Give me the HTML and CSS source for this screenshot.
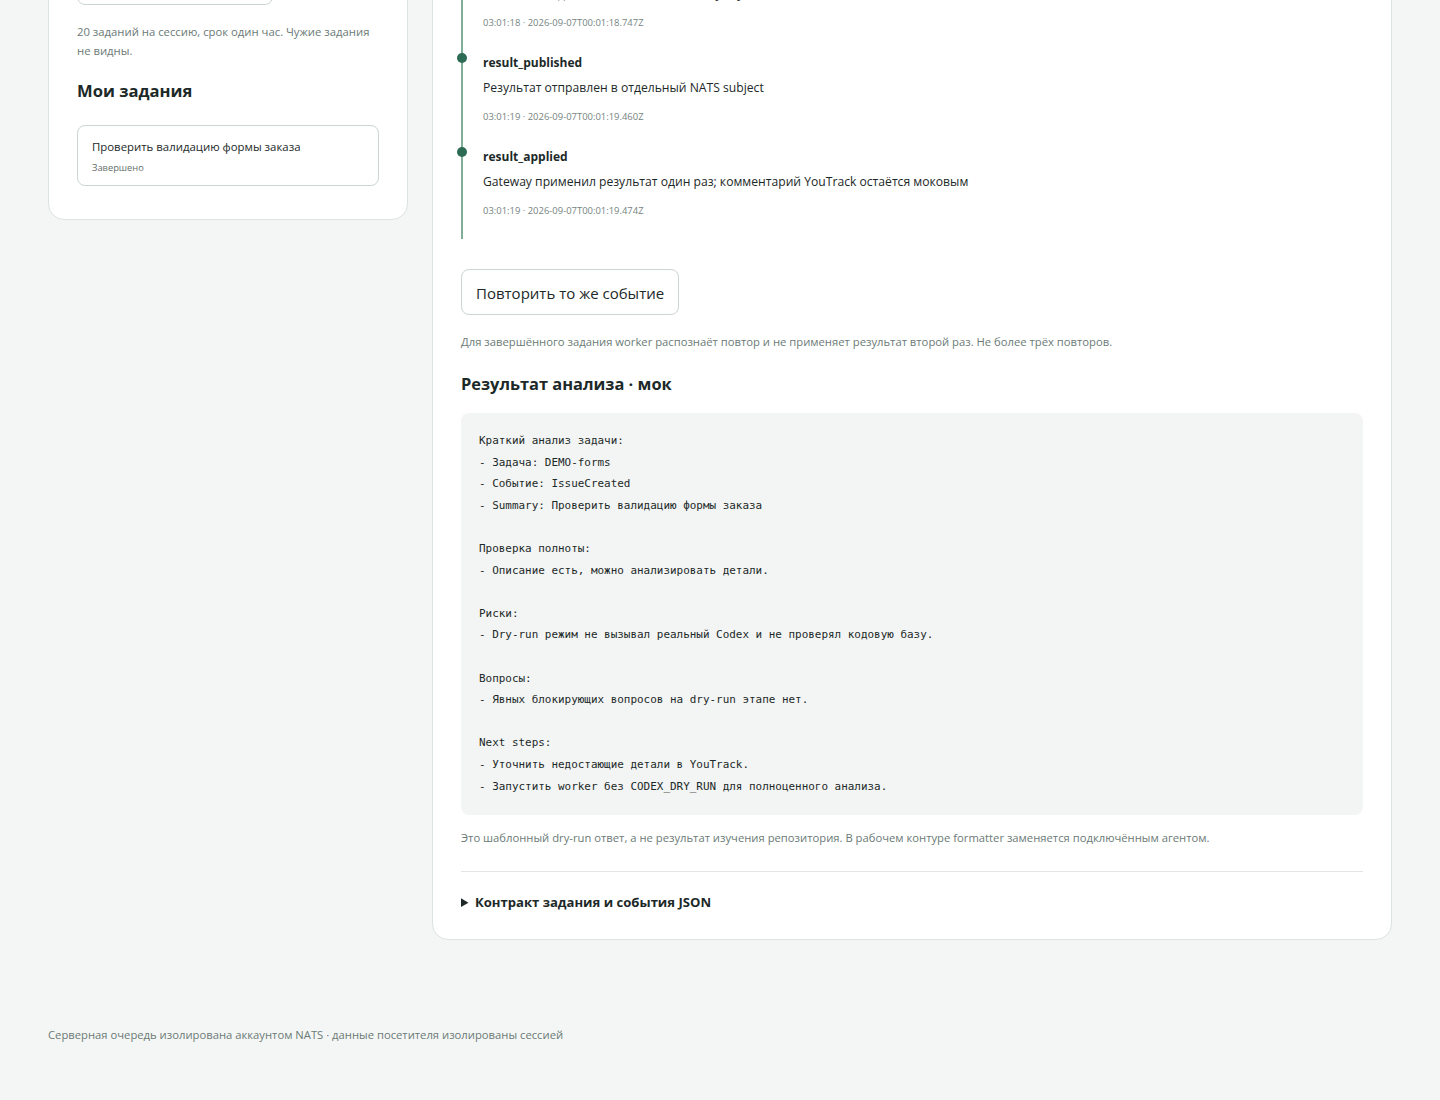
FILE: index.html
```html
<!DOCTYPE html>
<html lang="ru">
<head>
<meta charset="utf-8">
<title>Задания</title>
<link rel="stylesheet" href="styles.css">
</head>
<body>
<main class="page">
  <div class="layout">
    <aside class="card side">
      <button class="btn btn-side" type="button">Создать задание</button>
      <p class="hint">20 заданий на сессию, срок один час. Чужие задания не видны.</p>
      <h2 class="side-title">Мои задания</h2>
      <ul class="tasks">
        <li class="task">
          <div class="task-name">Проверить валидацию формы заказа</div>
          <div class="task-status">Завершено</div>
        </li>
      </ul>
    </aside>

    <section class="card main">
      <ol class="timeline">
        <li class="event">
          <span class="dot"></span>
          <div class="ev-title">result_formatted</div>
          <div class="ev-desc">Formatter подготовил ответ по шаблону dry-run</div>
          <div class="ev-time">03:01:18 · 2026-09-07T00:01:18.747Z</div>
        </li>
        <li class="event">
          <span class="dot"></span>
          <div class="ev-title">result_published</div>
          <div class="ev-desc">Результат отправлен в отдельный NATS subject</div>
          <div class="ev-time">03:01:19 · 2026-09-07T00:01:19.460Z</div>
        </li>
        <li class="event">
          <span class="dot"></span>
          <div class="ev-title">result_applied</div>
          <div class="ev-desc">Gateway применил результат один раз; комментарий YouTrack остаётся моковым</div>
          <div class="ev-time">03:01:19 · 2026-09-07T00:01:19.474Z</div>
        </li>
      </ol>

      <button class="btn btn-repeat" type="button">Повторить то же событие</button>
      <p class="note note-repeat">Для завершённого задания worker распознаёт повтор и не применяет результат второй раз. Не более трёх повторов.</p>

      <h2 class="result-title">Результат анализа · мок</h2>
      <pre class="result">Краткий анализ задачи:
- Задача: DEMO-forms
- Событие: IssueCreated
- Summary: Проверить валидацию формы заказа

Проверка полноты:
- Описание есть, можно анализировать детали.

Риски:
- Dry-run режим не вызывал реальный Codex и не проверял кодовую базу.

Вопросы:
- Явных блокирующих вопросов на dry-run этапе нет.

Next steps:
- Уточнить недостающие детали в YouTrack.
- Запустить worker без CODEX_DRY_RUN для полноценного анализа.</pre>
      <p class="note note-result">Это шаблонный dry-run ответ, а не результат изучения репозитория. В рабочем контуре formatter заменяется подключённым агентом.</p>

      <details class="contract">
        <summary>Контракт задания и события JSON</summary>
        <pre class="result">{}</pre>
      </details>
    </section>
  </div>

  <footer class="footer">Серверная очередь изолирована аккаунтом NATS · данные посетителя изолированы сессией</footer>
</main>
</body>
</html>
```

FILE: styles.css
```css
* { box-sizing: border-box; }

html, body {
  margin: 0;
  padding: 0;
  background: #f4f6f5;
}

body {
  font-family: "Open Sans", "Noto Sans", "Liberation Sans", sans-serif;
  color: #1c2928;
}

.page {
  padding: 0 48px 40px;
  margin-top: -70px;
}

.layout {
  display: grid;
  grid-template-columns: 360px 1fr;
  gap: 24px;
  align-items: start;
}

.card {
  background: #ffffff;
  border: 1px solid #dde3e1;
  border-radius: 16px;
  padding: 28px;
}

.side {
  padding-bottom: 33px;
}

.main {
  padding-bottom: 27px;
}

.btn {
  font-family: inherit;
  background: #ffffff;
  border: 1px solid #cdd5d2;
  border-radius: 8px;
  color: #1c2928;
  cursor: pointer;
}

.btn-side {
  display: block;
  height: 46px;
  width: 196px;
  font-size: 14px;
}

.hint {
  margin: 17px 0 0;
  font-size: 11.3px;
  line-height: 19px;
  color: #6b7a76;
}

.side-title {
  margin: 19px 0 0;
  font-size: 16.6px;
  line-height: 24px;
  font-weight: 700;
  color: #1c2928;
}

.tasks {
  list-style: none;
  margin: 22px 0 0;
  padding: 0;
}

.task {
  border: 1px solid #cdd5d2;
  border-radius: 8px;
  padding: 12px 14px 10px;
}

.task-name {
  font-size: 11.4px;
  line-height: 18px;
  color: #1c2928;
}

.task-status {
  margin-top: 5px;
  font-size: 9.3px;
  line-height: 14px;
  color: #5f6e6a;
}

.timeline {
  list-style: none;
  margin: 0;
  padding: 0 0 20px;
  border-left: 2px solid #7fae9a;
  display: flex;
  flex-direction: column;
  gap: 22px;
}

.event {
  position: relative;
  padding-left: 20px;
}

.dot {
  position: absolute;
  left: -6px;
  top: 0;
  width: 10px;
  height: 10px;
  border-radius: 50%;
  background: #2e6b55;
}

.ev-title {
  font-size: 12px;
  line-height: 20px;
  font-weight: 700;
  color: #1c2928;
}

.ev-desc {
  margin-top: 5px;
  font-size: 12.15px;
  line-height: 20px;
  color: #1c2928;
}

.ev-time {
  margin-top: 11px;
  font-size: 9.45px;
  line-height: 16px;
  color: #76847f;
}

.btn-repeat {
  display: block;
  margin-top: 30px;
  height: 46px;
  padding: 0 14px 0;
  padding-top: 1px;
  font-size: 15px;
}

.note {
  margin: 0;
  font-size: 11.25px;
  line-height: 16px;
  color: #6b7a76;
}

.note-repeat {
  margin-top: 19px;
}

.result-title {
  margin: 23px 0 0;
  font-size: 16.4px;
  line-height: 22px;
  font-weight: 700;
  color: #1c2928;
}

.result {
  margin: 18px 0 0;
  padding: 17px 18px 18px;
  background: #f3f5f4;
  border-radius: 8px;
  font-family: "DejaVu Sans Mono", "Liberation Mono", monospace;
  font-size: 10.95px;
  line-height: 21.6px;
  color: #1c2928;
  white-space: pre;
  overflow: auto;
}

.note-result {
  margin-top: 15px;
}

.contract {
  margin-top: 25px;
  border-top: 1px solid #e2e7e5;
  padding-top: 20px;
}

.contract summary {
  font-size: 13.1px;
  line-height: 20px;
  font-weight: 700;
  color: #1c2928;
  cursor: pointer;
}

.footer {
  margin-top: 87px;
  font-size: 11.25px;
  line-height: 16px;
  color: #6b7a76;
}
```
